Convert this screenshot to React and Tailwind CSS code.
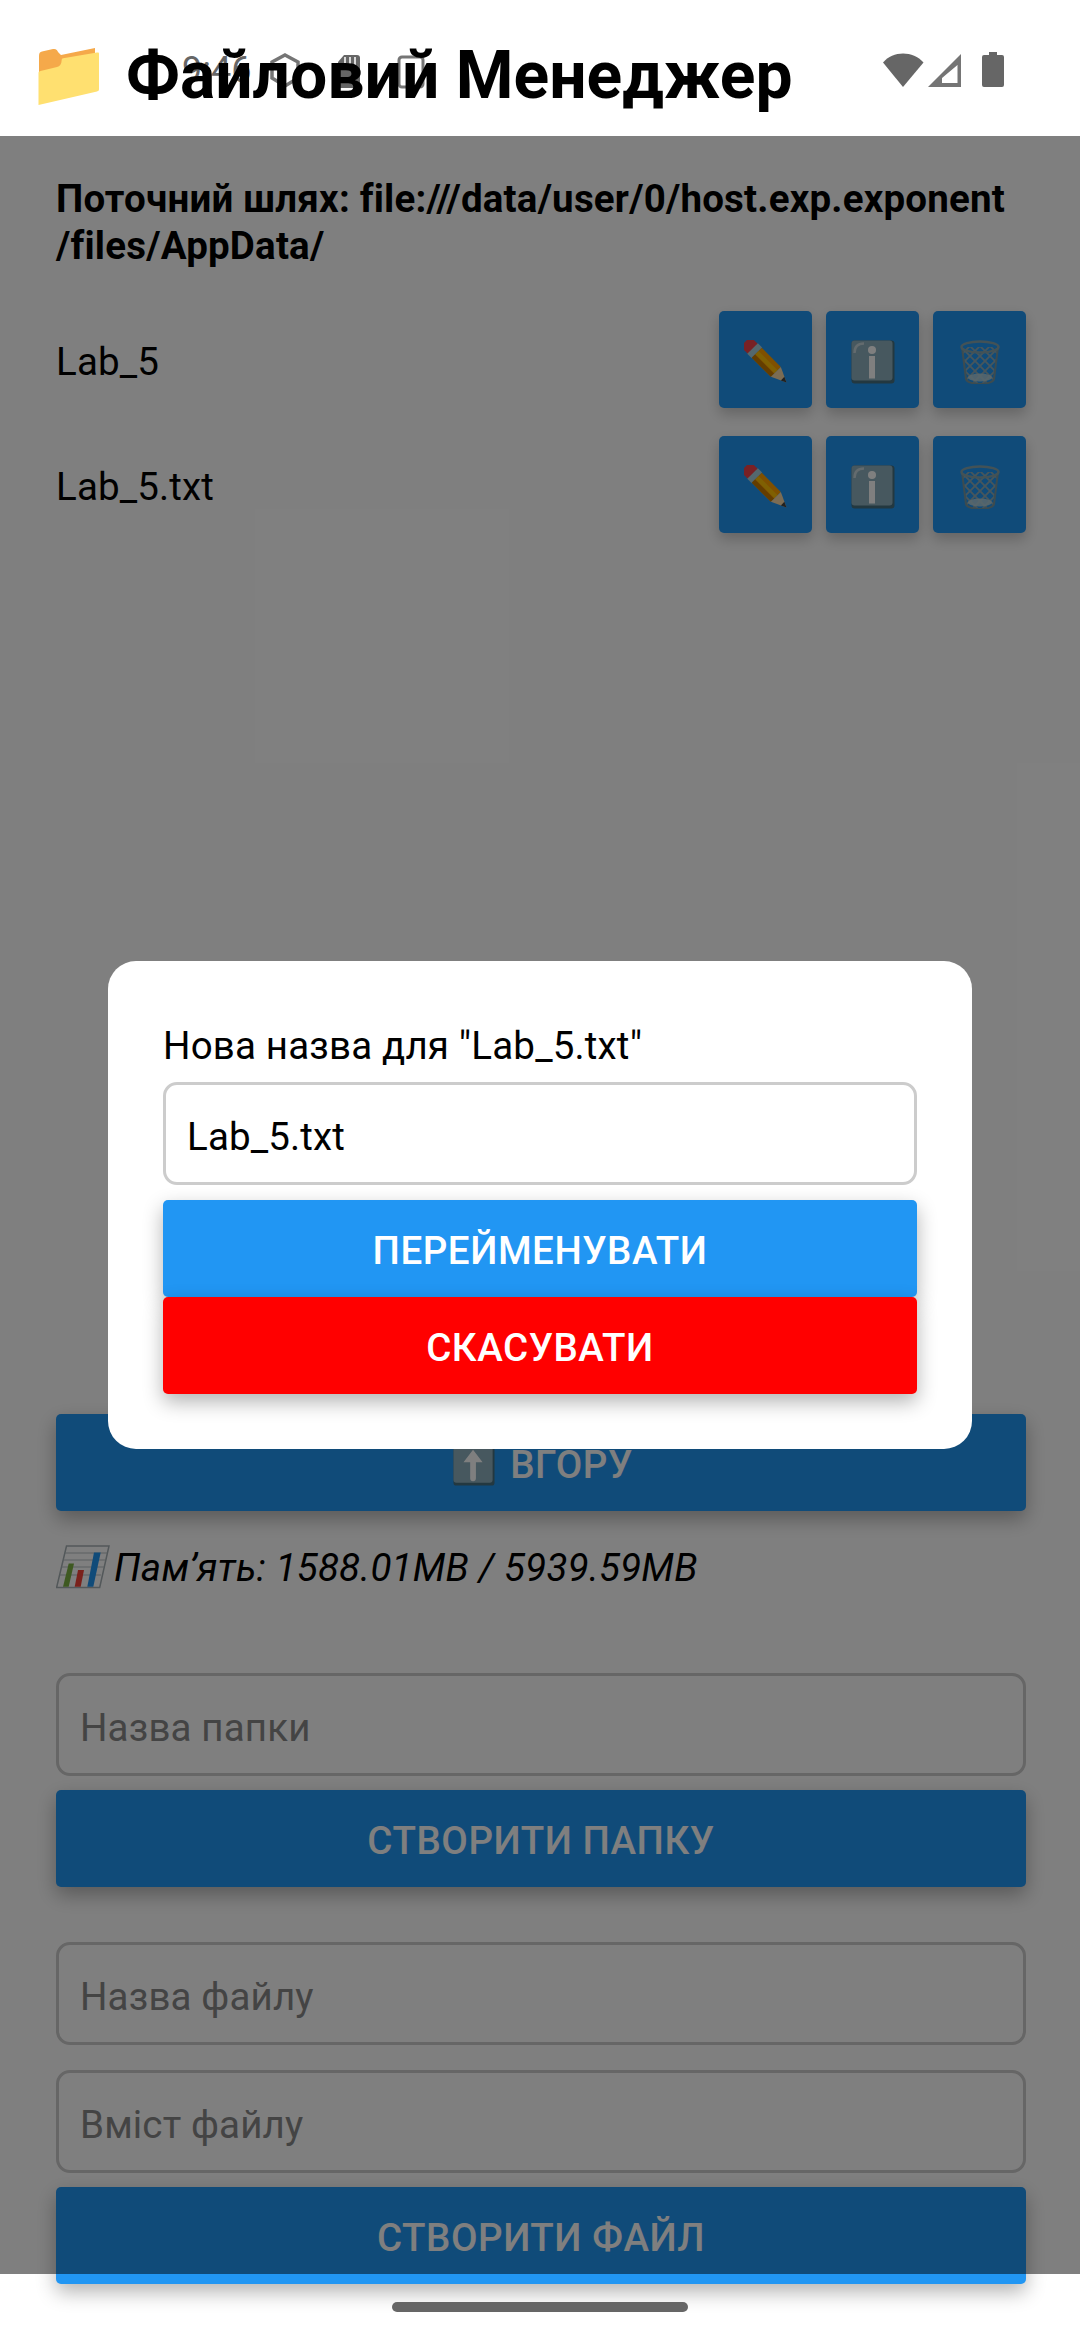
const font = { fontFamily: "Roboto, sans-serif" };

const PencilEmoji = () => (
  <svg viewBox="0 0 44 44" className="w-[44px] h-[44px]">
    <g transform="rotate(45 22 22)">
      <path d="M-4 15h8v14h-8a3 3 0 0 1-3-3v-8a3 3 0 0 1 3-3z" fill="#f0434a" />
      <rect x="3" y="14.5" width="6" height="15" fill="#a9d0dc" />
      <rect x="9" y="15" width="27" height="14" fill="#ffa000" />
      <rect x="9" y="19.500" width="27" height="4.500" fill="#ffc107" />
      <rect x="9" y="24.500" width="27" height="4.500" fill="#c97a00" />
      <path d="M36 15l15 7-15 7z" fill="#f7d9a8" />
      <path d="M45.500 19.500l5.500 2.500-5.500 2.500z" fill="#424242" />
    </g>
  </svg>
);

const InfoEmoji = () => (
  <svg viewBox="0 0 44 44" className="w-[44px] h-[44px]">
    <rect x="0.500" y="0.500" width="43" height="43" rx="3" fill="#467080" />
    <rect x="0.500" y="0.500" width="41" height="40" rx="3" fill="#8eb0be" />
    <path d="M3.500 13c0-6 3-9.500 9.500-9.500" fill="none" stroke="#c7d6dc" strokeWidth="2.500" />
    <circle cx="21" cy="10" r="4" fill="#fff" />
    <rect x="18" y="16" width="6" height="22.500" fill="#fff" />
  </svg>
);

const TrashEmoji = () => (
  <svg viewBox="0 0 44 44" className="w-[44px] h-[44px]">
    <clipPath id="basket">
      <path d="M4 7l4 32c.5 3 7 5 14 5s13.500-2 14-5l4-32z" />
    </clipPath>
    <g clipPath="url(#basket)" stroke="#8eacb8" strokeWidth="1.800" fill="none">
      <path d="M-8 6l44 44M2 6l44 44M12 6l36 36M22 6l30 30M32 6l20 20M-8 16l36 36M-8 26l26 26" />
      <path d="M52 6L8 50M42 6L-2 50M32 6L-4 42M22 6L-8 36M12 6L-8 26M52 16L16 52M52 26L26 52" />
    </g>
    <ellipse cx="22" cy="37.500" rx="12" ry="4" fill="#b5d0d8" fillOpacity="0.850" />
    <path d="M4 7l4 32c.5 3 7 5 14 5s13.500-2 14-5l4-32" fill="none" stroke="#78979f" strokeWidth="2" />
    <ellipse cx="22" cy="7" rx="18.500" ry="5.500" fill="none" stroke="#86a5ad" strokeWidth="2.500" />
  </svg>
);

const ArrowEmoji = () => (
  <svg viewBox="0 0 44 44" className="w-[42px] h-[42px] ml-[4px]">
    <rect x="0.500" y="0.500" width="43" height="43" rx="3" fill="#467080" />
    <rect x="0.500" y="0.500" width="41" height="40" rx="3" fill="#8eb0be" />
    <path d="M21 6l10 13h-7v17a3 3 0 0 1-6 0V19h-7z" fill="#fff" />
  </svg>
);

const ChartEmoji = () => (
  <svg viewBox="0 0 54 44" className="w-[54px] h-[44px] shrink-0">
    <path d="M10.500 1H53L43.700 42.500H.6z" fill="none" stroke="#a6b0b4" strokeWidth="1.500" />
    <path d="M9 8h42M7.500 15h42M6 22h42M4 30h41" stroke="#b6c0c4" strokeWidth="1.200" />
    <path d="M12.700 18.500H18L12.700 41.700H7z" fill="#7db343" />
    <path d="M22 25h6l-3.300 16.700h-6z" fill="#f44336" />
    <path d="M38 7.500h6.700l-7.400 34.200h-6z" fill="#2196f3" />
  </svg>
);

const FolderEmoji = () => (
  <svg viewBox="0 0 62 60" className="w-[62px] h-[60px] shrink-0 mt-[18px]">
    <path d="M1 9c0-3 1-4 3-4.500L15 2c3-.5 4.500 1 5 3l3 3L57 1v14L1 50z" fill="#f5a94a" />
    <path d="M.5 58V26c0-1 .5-1.500 2-2L19 20c3-.8 4.500-3 4.700-7 0-1 .5-1.500 1.500-1.700L59 5.500c1.500-.3 2 0 2 1.500v35c0 1.500-.5 2-2 2.500z" fill="#ffe070" />
  </svg>
);

const StatusLeftIcons = () => (
  <svg viewBox="0 0 155 38" className="w-[155px] h-[38px]">
    <path d="M15 3l13 7v16l-13 8-13-8V10z" fill="none" stroke="#757575" strokeWidth="3.500" />
    <path d="M74 3h13a3 3 0 0 1 3 3v27a3 3 0 0 1-3 3H71a3 3 0 0 1-3-3V10z" fill="#666" />
    <path d="M75 5v8M80 5v8M85 5v8" stroke="#fff" strokeWidth="1.500" />
    <rect x="129" y="5" width="24" height="30" rx="3" fill="none" stroke="#757575" strokeWidth="3" />
  </svg>
);

const StatusRightIcons = () => (
  <svg viewBox="0 0 124 40" className="w-[124px] h-[40px]">
    <path d="M1 12.500C11 .5 31 .5 41.500 12.500L21 37z" fill="#666" />
    <path d="M46 37L79 4v33z M60 33h15.500V15L60 28z" fill="#757575" fillRule="evenodd" />
    <path d="M100 7a2 2 0 0 1 2-2h5V2h8v3h5a2 2 0 0 1 2 2v28a2 2 0 0 1-2 2h-18a2 2 0 0 1-2-2z" fill="#666" />
  </svg>
);

const ActionBtn = ({ children }) => (
  <button className="w-[93px] h-[97px] pt-[4px] flex items-center justify-center bg-[#2196f3] rounded-[5px] shadow-[0_6px_14px_rgba(0,0,0,0.22)]">
    {children}
  </button>
);

const Btn = ({ children, className = "bg-[#2196f3]" }) => (
  <button className={"w-full h-[97px] pt-[5px] flex items-center justify-center gap-[15px] rounded-[5px] text-white font-medium text-[38.5px] tracking-[0.55px] shadow-[0_8px_20px_rgba(0,0,0,0.3)] " + className}>
    {children}
  </button>
);

const Field = ({ placeholder, value, className = "" }) => (
  <input
    readOnly
    value={value}
    placeholder={placeholder}
    className={"w-full h-[103px] pt-[5px] px-[21px] border-[3px] border-[#cccccc] rounded-[14px] text-[38.5px] tracking-[0.15px] text-black placeholder:text-[#888888] outline-none " + className}
    style={font}
  />
);

const FileRow = ({ name }) => (
  <div className="h-[97px] flex items-center justify-between">
    <span className="pt-[5px] text-[38.5px] tracking-[0.15px] text-black">{name}</span>
    <div className="flex gap-[14px]">
      <ActionBtn><PencilEmoji /></ActionBtn>
      <ActionBtn><InfoEmoji /></ActionBtn>
      <ActionBtn><TrashEmoji /></ActionBtn>
    </div>
  </div>
);

export default function App() {
  return (
    <div className="relative w-[1080px] h-[2340px] bg-white overflow-hidden" style={font}>
      {/* header, system status bar shows through behind the title */}
      <div className="relative h-[136px] flex items-center pl-[38px]">
        <span className="absolute left-[182px] top-[49px] text-[#666] text-[36px] leading-[42px]">9:46</span>
        <div className="absolute left-[270px] top-[52px]"><StatusLeftIcons /></div>
        <div className="absolute left-[882px] top-[50px]"><StatusRightIcons /></div>
        <FolderEmoji />
        <h1 className="relative ml-[26px] mt-[16px] text-[66px] font-bold text-black leading-none">Файловий Менеджер</h1>
      </div>

      <main className="pl-[56px] pr-[54px]">
        <p className="pt-[39px] text-[38.5px] tracking-[0.2px] leading-[47px] font-bold text-black whitespace-nowrap">
          Поточний шлях: file:///data/user/0/host.exp.exponent
          <br />/files/AppData/
        </p>
        <div className="mt-[42px] flex flex-col gap-[28px]">
          <FileRow name="Lab_5" />
          <FileRow name="Lab_5.txt" />
        </div>

        <div className="mt-[881px]">
          <Btn><ArrowEmoji />ВГОРУ</Btn>
        </div>
        <p className="mt-[32px] flex items-center gap-[4px] text-[38.5px] tracking-[0.22px] italic text-black leading-[46px]">
          <ChartEmoji /><span className="pt-[2px]">Пам’ять: 1588.01MB / 5939.59MB</span>
        </p>

        <div className="mt-[82px] flex flex-col gap-[14px]">
          <Field placeholder="Назва папки" />
          <Btn>СТВОРИТИ ПАПКУ</Btn>
        </div>
        <div className="mt-[55px] flex flex-col gap-[14px]">
          <Field placeholder="Назва файлу" className="mb-[11px]" />
          <Field placeholder="Вміст файлу" />
          <Btn>СТВОРИТИ ФАЙЛ</Btn>
        </div>
      </main>

      {/* modal backdrop */}
      <div className="absolute left-0 right-0 top-[136px] h-[2138px] bg-black/50 flex items-center justify-center">
        <div className="w-[864px] bg-white rounded-[28px] p-[55px]">
          <p className="mt-[7px] mb-[13px] text-[38.5px] tracking-[0.17px] leading-[46px] text-black">Нова назва для "Lab_5.txt"</p>
          <Field value="Lab_5.txt" className="h-[102px] mb-[15px]" />
          <Btn>ПЕРЕЙМЕНУВАТИ</Btn>
          <Btn className="bg-[#ff0000]">СКАСУВАТИ</Btn>
        </div>
      </div>

      {/* gesture bar */}
      <div className="absolute left-[392px] top-[2302px] w-[296px] h-[10px] rounded-full bg-[#666]" />
    </div>
  );
}
